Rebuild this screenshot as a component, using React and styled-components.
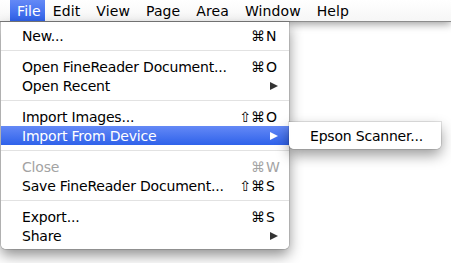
import React from "react";
import styled, { createGlobalStyle } from "styled-components";

const GlobalStyle = createGlobalStyle`
  html, body {
    margin: 0;
    padding: 0;
    background: #fff;
  }
  body {
    width: 451px;
    height: 263px;
    overflow: hidden;
    font-family: "DejaVu Sans", "Liberation Sans", sans-serif;
    font-size: 14px;
    color: #000;
  }
`;

const Screen = styled.div`
  position: relative;
  width: 451px;
  height: 263px;
  background: #fff;
`;

const MenuBar = styled.div`
  display: flex;
  align-items: stretch;
  height: 21px;
  padding-left: 10px;
  background: linear-gradient(#ffffff, #f6f6f6);
  border-bottom: 1px solid #8c8c8c;
  box-shadow: 0 2px 8px rgba(0, 0, 0, 0.4);
  position: relative;
  z-index: 1;
`;

const BarItem = styled.div`
  position: relative;
  display: flex;
  align-items: center;
  padding: ${(p) => (p.$active ? "0 4px 0 7px" : "0 8px")};
  color: ${(p) => (p.$active ? "#fff" : "#000")};
  background: ${(p) => (p.$active ? "linear-gradient(#6489f6, #2f62ea)" : "transparent")};
  letter-spacing: 0.1px;
`;

const Dropdown = styled.div`
  position: absolute;
  left: 1px;
  top: 22px;
  width: 288px;
  padding: 4px 0;
  background: rgba(255, 255, 255, 0.98);
  border-radius: 0 0 5px 5px;
  box-shadow: 0 0 0 1px rgba(0, 0, 0, 0.12), 0 6px 14px rgba(0, 0, 0, 0.45);
  z-index: 2;
`;

const Row = styled.div`
  position: relative;
  display: flex;
  align-items: center;
  height: 19px;
  padding-left: 21px;
  letter-spacing: -0.2px;
  color: ${(p) => (p.$disabled ? "#a3a3a3" : p.$active ? "#fff" : "#000")};
  background: ${(p) => (p.$active ? "linear-gradient(#6489f6, #2f62ea)" : "transparent")};
`;

const Label = styled.span`
  flex: 1;
  white-space: nowrap;
`;

const Shortcut = styled.span`
  display: flex;
  align-items: center;
  margin-right: 9px;
  letter-spacing: 0;
`;

const Mods = styled.span`
  text-align: right;
`;

const Key = styled.span`
  width: 14px;
  margin-left: 1px;
`;

const Arrow = styled.span`
  width: 0;
  height: 0;
  margin-right: 11px;
  border-top: 4.5px solid transparent;
  border-bottom: 4.5px solid transparent;
  border-left: 8px solid ${(p) => (p.$active ? "#fff" : "#333")};
`;

const Separator = styled.div`
  height: 1px;
  margin: 5px 0 6px;
  background: #e2e2e2;
`;

const Submenu = styled.div`
  position: absolute;
  left: 288px;
  top: -4px;
  width: 152px;
  padding: 4px 0;
  background: rgba(255, 255, 255, 0.98);
  border-radius: 0 0 5px 5px;
  box-shadow: 0 0 0 1px rgba(0, 0, 0, 0.1), 0 6px 14px rgba(0, 0, 0, 0.4);
  color: #000;
`;

const SubRow = styled.div`
  display: flex;
  align-items: center;
  height: 19px;
  padding-left: 21px;
  white-space: nowrap;
`;

const groups = [
  [{ label: "New...", mods: "⌘", key: "N" }],
  [
    { label: "Open FineReader Document...", mods: "⌘", key: "O" },
    { label: "Open Recent", submenu: true },
  ],
  [
    { label: "Import Images...", mods: "⇧⌘", key: "O" },
    { label: "Import From Device", submenu: true, active: true, children: ["Epson Scanner..."] },
  ],
  [
    { label: "Close", mods: "⌘", key: "W", disabled: true },
    { label: "Save FineReader Document...", mods: "⇧⌘", key: "S" },
  ],
  [
    { label: "Export...", mods: "⌘", key: "S" },
    { label: "Share", submenu: true },
  ],
];

const barItems = ["File", "Edit", "View", "Page", "Area", "Window", "Help"];

function MenuRow({ item }) {
  return (
    <Row $active={item.active} $disabled={item.disabled}>
      <Label>{item.label}</Label>
      {item.key && (
        <Shortcut>
          <Mods>{item.mods}</Mods>
          <Key>{item.key}</Key>
        </Shortcut>
      )}
      {item.submenu && <Arrow $active={item.active} />}
      {item.children && (
        <Submenu>
          {item.children.map((c) => (
            <SubRow key={c}>{c}</SubRow>
          ))}
        </Submenu>
      )}
    </Row>
  );
}

export default function App() {
  return (
    <>
      <GlobalStyle />
      <Screen>
        <MenuBar>
          {barItems.map((name) => (
            <BarItem key={name} $active={name === "File"}>
              {name}
            </BarItem>
          ))}
        </MenuBar>
        <Dropdown>
          {groups.map((group, i) => (
            <React.Fragment key={i}>
              {i > 0 && <Separator />}
              {group.map((item) => (
                <MenuRow key={item.label} item={item} />
              ))}
            </React.Fragment>
          ))}
        </Dropdown>
      </Screen>
    </>
  );
}
